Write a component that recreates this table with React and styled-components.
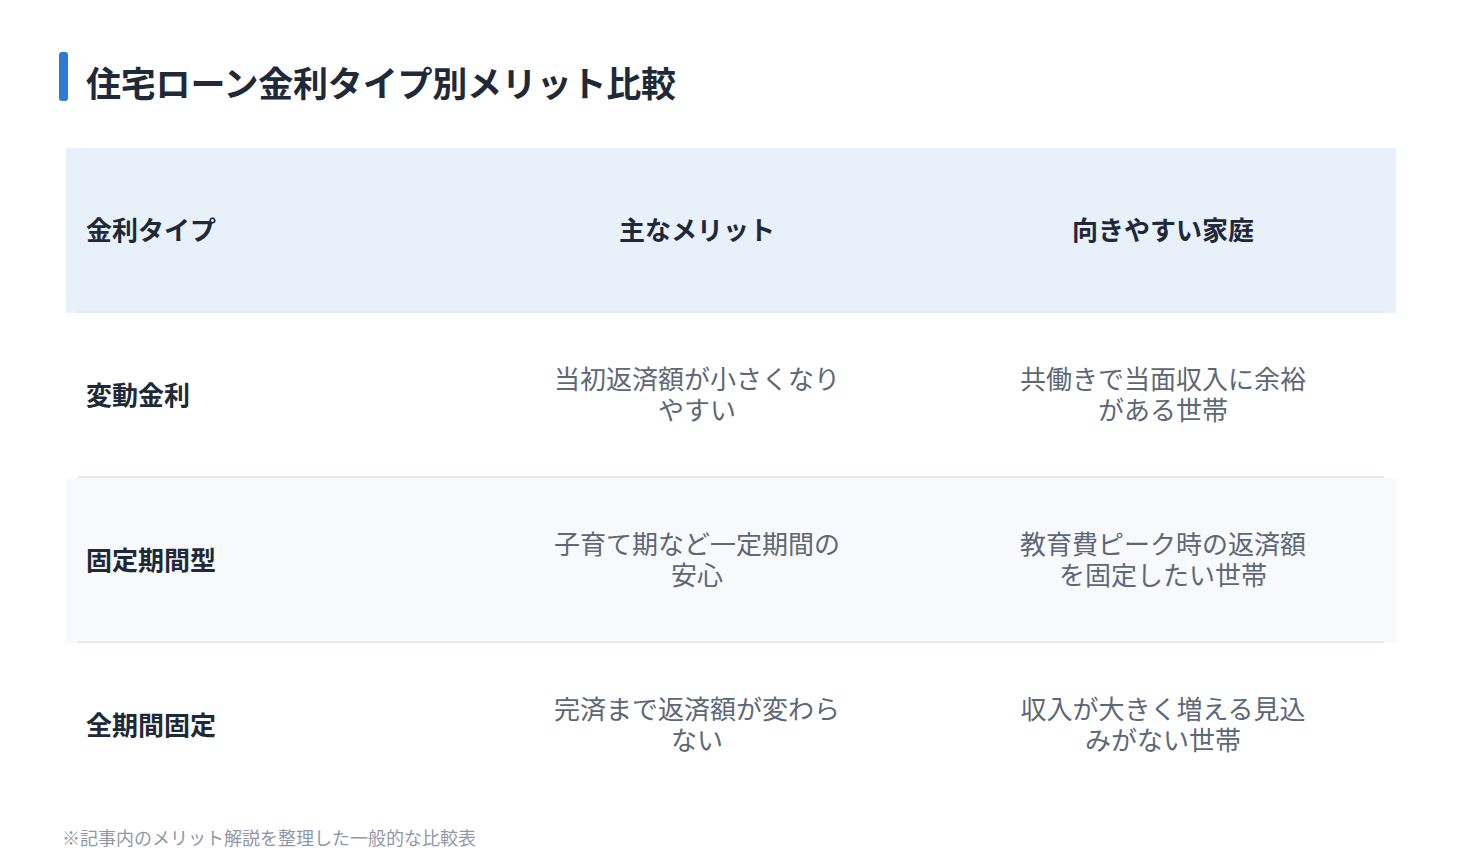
import React from "react";
import styled, { createGlobalStyle } from "styled-components";

const Global = createGlobalStyle`
  html, body { margin: 0; padding: 0; background: #ffffff; }
  body { font-family: "Noto Sans CJK JP", "Noto Sans", sans-serif; }
`;

const Page = styled.div`
  width: 1462px;
  min-height: 867px;
  box-sizing: border-box;
  padding: 52px 0 0 59px;
`;

const TitleRow = styled.div`
  display: flex;
  align-items: center;
  gap: 18px;
  height: 49px;
`;

const Bar = styled.div`
  width: 9px;
  height: 49px;
  border-radius: 3px;
  background: #2a7ad6;
`;

const Title = styled.h1`
  margin: 0;
  padding-top: 9px;
  font-size: 35px;
  line-height: 49px;
  font-weight: 700;
  color: #1f2937;
  letter-spacing: -0.2px;
`;

const Table = styled.div`
  margin: 47px 0 0 7px;
  width: 1330px;
`;

const Row = styled.div`
  position: relative;
  display: grid;
  grid-template-columns: 398px 466px 466px;
  height: ${(p) => p.$h}px;
  background: ${(p) => p.$bg};
  &::after {
    content: "";
    display: ${(p) => (p.$line ? "block" : "none")};
    position: absolute;
    left: 12px;
    right: 12px;
    bottom: 0;
    height: 2px;
    background: #e6e9ef;
  }
`;

const Cell = styled.div`
  display: flex;
  align-items: center;
  justify-content: ${(p) => (p.$center ? "center" : "flex-start")};
  padding: 0 ${(p) => (p.$center ? "0" : "20px")} 5px;
  text-align: ${(p) => (p.$center ? "center" : "left")};
  font-size: 26px;
  line-height: 31px;
  font-weight: ${(p) => (p.$bold ? 700 : 400)};
  color: ${(p) => (p.$bold ? "#1f2937" : "#5d6776")};
`;

const Wrap = styled.span`
  display: block;
  max-width: 300px;
`;

const Note = styled.p`
  margin: 17px 0 0 3px;
  font-size: 18px;
  line-height: 24px;
  color: #8f98a8;
`;

const rows = [
  ["変動金利", "当初返済額が小さくなりやすい", "共働きで当面収入に余裕がある世帯", "#ffffff"],
  ["固定期間型", "子育て期など一定期間の安心", "教育費ピーク時の返済額を固定したい世帯", "#f7f9fc"],
  ["全期間固定", "完済まで返済額が変わらない", "収入が大きく増える見込みがない世帯", "#ffffff"],
];

export default function App() {
  return (
    <Page>
      <Global />
      <TitleRow>
        <Bar />
        <Title>住宅ローン金利タイプ別メリット比較</Title>
      </TitleRow>
      <Table>
        <Row $h={165} $bg="#e8f0fa" $line>
          <Cell $bold>金利タイプ</Cell>
          <Cell $bold $center>主なメリット</Cell>
          <Cell $bold $center>向きやすい家庭</Cell>
        </Row>
        {rows.map(([a, b, c, bg], i) => (
          <Row key={a} $h={165} $bg={bg} $line={i < rows.length - 1}>
            <Cell $bold>{a}</Cell>
            <Cell $center><Wrap>{b}</Wrap></Cell>
            <Cell $center><Wrap>{c}</Wrap></Cell>
          </Row>
        ))}
      </Table>
      <Note>※記事内のメリット解説を整理した一般的な比較表</Note>
    </Page>
  );
}
